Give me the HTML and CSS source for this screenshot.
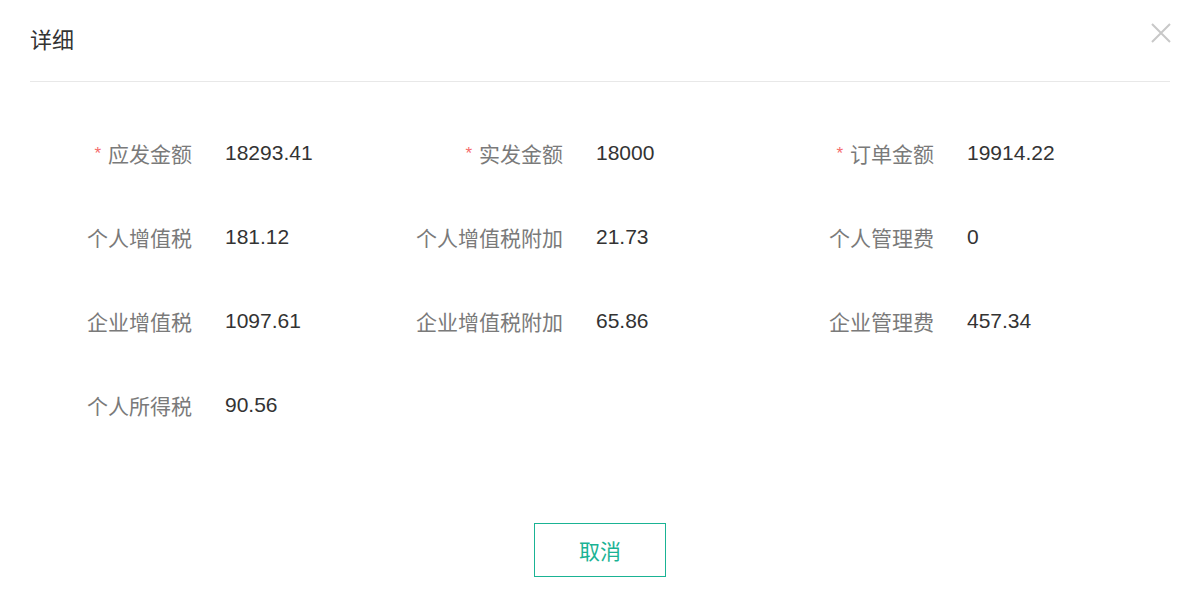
FILE: index.html
```html
<!DOCTYPE html>
<html lang="zh-CN">

<head>
    <meta charset="UTF-8">
    <title>详细</title>
    <link rel="stylesheet" href="styles.css">
</head>

<body>
    <div class="dialog">
        <div class="dialog-header">
            <span class="dialog-title">详细</span>
            <button class="dialog-close" aria-label="关闭">
                <svg width="20" height="20" viewBox="0 0 20 20">
                    <path d="M1 1 L19 19 M19 1 L1 19" stroke="#c8c8c8" stroke-width="2" fill="none" />
                </svg>
            </button>
        </div>

        <div class="detail-grid">
            <div class="field">
                <div class="label"><span class="required">*</span>应发金额</div>
                <div class="value">18293.41</div>
            </div>
            <div class="field">
                <div class="label"><span class="required">*</span>实发金额</div>
                <div class="value">18000</div>
            </div>
            <div class="field">
                <div class="label"><span class="required">*</span>订单金额</div>
                <div class="value">19914.22</div>
            </div>

            <div class="field">
                <div class="label">个人增值税</div>
                <div class="value">181.12</div>
            </div>
            <div class="field">
                <div class="label">个人增值税附加</div>
                <div class="value">21.73</div>
            </div>
            <div class="field">
                <div class="label">个人管理费</div>
                <div class="value">0</div>
            </div>

            <div class="field">
                <div class="label">企业增值税</div>
                <div class="value">1097.61</div>
            </div>
            <div class="field">
                <div class="label">企业增值税附加</div>
                <div class="value">65.86</div>
            </div>
            <div class="field">
                <div class="label">企业管理费</div>
                <div class="value">457.34</div>
            </div>

            <div class="field">
                <div class="label">个人所得税</div>
                <div class="value">90.56</div>
            </div>
        </div>

        <div class="dialog-footer">
            <button class="btn-cancel">取消</button>
        </div>
    </div>
</body>

</html>
```

FILE: styles.css
```css
body {
    margin: 0;
    background-color: #ffffff;
    font-family: "Liberation Sans", Arial, "Noto Sans CJK SC", sans-serif;
}

.dialog {
    width: 1140px;
    padding: 0 28px 0 30px;
}

.dialog-header {
    display: flex;
    align-items: center;
    justify-content: space-between;
    height: 81px;
    border-bottom: 1px solid #e8e8e8;
}

.dialog-title {
    font-size: 22px;
    color: #333333;
    margin-top: -5px;
}

.dialog-close {
    border: none;
    background: none;
    padding: 0;
    margin-right: -1px;
    margin-top: -15px;
    cursor: pointer;
    line-height: 0;
}

.detail-grid {
    display: grid;
    grid-template-columns: 371px 371px 371px;
    grid-auto-rows: 84px;
    padding-top: 29px;
    margin-left: 12px;
}

.field {
    display: flex;
    align-items: center;
}

.label {
    width: 150px;
    padding-right: 33px;
    text-align: right;
    font-size: 21px;
    color: #7a7a7a;
    white-space: nowrap;
}

.required {
    color: #f56c6c;
    font-size: 17px;
    margin-right: 7px;
    position: relative;
    top: -3px;
}

.value {
    font-size: 21px;
    color: #333333;
}

.dialog-footer {
    display: flex;
    justify-content: center;
    padding-top: 76px;
}

.btn-cancel {
    width: 132px;
    height: 54px;
    border: 1px solid #1ab394;
    background-color: #ffffff;
    color: #1ab394;
    font-size: 21px;
    font-family: "Liberation Sans", Arial, "Noto Sans CJK SC", sans-serif;
    cursor: pointer;
}
```
